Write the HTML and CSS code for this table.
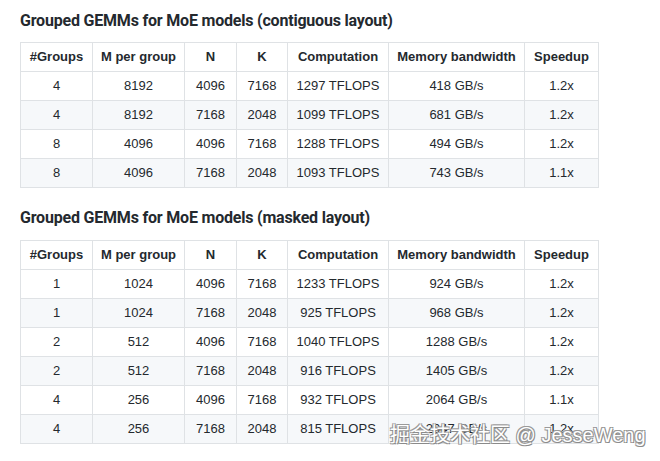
FILE: index.html
```html
<!DOCTYPE html>
<html>
<head>
<meta charset="utf-8">
<link rel="stylesheet" href="styles.css">
</head>
<body>
<div class="page">
  <h2 class="title title-first">Grouped GEMMs for MoE models (contiguous layout)</h2>
  <table class="perf">
    <colgroup>
      <col class="c1"><col class="c2"><col class="c3"><col class="c4"><col class="c5"><col class="c6"><col class="c7">
    </colgroup>
    <thead>
      <tr><th>#Groups</th><th>M per group</th><th>N</th><th>K</th><th>Computation</th><th>Memory bandwidth</th><th>Speedup</th></tr>
    </thead>
    <tbody>
      <tr><td>4</td><td>8192</td><td>4096</td><td>7168</td><td>1297 TFLOPS</td><td>418 GB/s</td><td>1.2x</td></tr>
      <tr><td>4</td><td>8192</td><td>7168</td><td>2048</td><td>1099 TFLOPS</td><td>681 GB/s</td><td>1.2x</td></tr>
      <tr><td>8</td><td>4096</td><td>4096</td><td>7168</td><td>1288 TFLOPS</td><td>494 GB/s</td><td>1.2x</td></tr>
      <tr><td>8</td><td>4096</td><td>7168</td><td>2048</td><td>1093 TFLOPS</td><td>743 GB/s</td><td>1.1x</td></tr>
    </tbody>
  </table>

  <h2 class="title title-second">Grouped GEMMs for MoE models (masked layout)</h2>
  <table class="perf">
    <colgroup>
      <col class="c1"><col class="c2"><col class="c3"><col class="c4"><col class="c5"><col class="c6"><col class="c7">
    </colgroup>
    <thead>
      <tr><th>#Groups</th><th>M per group</th><th>N</th><th>K</th><th>Computation</th><th>Memory bandwidth</th><th>Speedup</th></tr>
    </thead>
    <tbody>
      <tr><td>1</td><td>1024</td><td>4096</td><td>7168</td><td>1233 TFLOPS</td><td>924 GB/s</td><td>1.2x</td></tr>
      <tr><td>1</td><td>1024</td><td>7168</td><td>2048</td><td>925 TFLOPS</td><td>968 GB/s</td><td>1.2x</td></tr>
      <tr><td>2</td><td>512</td><td>4096</td><td>7168</td><td>1040 TFLOPS</td><td>1288 GB/s</td><td>1.2x</td></tr>
      <tr><td>2</td><td>512</td><td>7168</td><td>2048</td><td>916 TFLOPS</td><td>1405 GB/s</td><td>1.2x</td></tr>
      <tr><td>4</td><td>256</td><td>4096</td><td>7168</td><td>932 TFLOPS</td><td>2064 GB/s</td><td>1.1x</td></tr>
      <tr><td>4</td><td>256</td><td>7168</td><td>2048</td><td>815 TFLOPS</td><td>2047 GB/s</td><td>1.2x</td></tr>
    </tbody>
  </table>
</div>
<div class="watermark">掘金技术社区 @ JesseWeng</div>
</body>
</html>
```

FILE: styles.css
```css
html, body {
  margin: 0;
  padding: 0;
  background: #ffffff;
}

body {
  font-family: "Liberation Sans", Arial, sans-serif;
  color: #24292e;
  width: 660px;
  height: 461px;
  overflow: hidden;
  position: relative;
}

.page {
  padding: 11px 20px 0 20px;
}

.title {
  margin: 0;
  font-family: Roboto, "Liberation Sans", sans-serif;
  font-size: 16px;
  line-height: 20px;
  font-weight: bold;
  color: #24292e;
  letter-spacing: -0.2px;
}

.title-first {
  margin-bottom: 11px;
}

.title-second {
  margin-top: 20px;
  margin-bottom: 12px;
}

.perf {
  border-collapse: collapse;
  table-layout: fixed;
  width: 578px;
  font-size: 13px;
}

.perf .c1 { width: 72px; }
.perf .c2 { width: 92px; }
.perf .c3 { width: 52px; }
.perf .c4 { width: 51px; }
.perf .c5 { width: 101px; }
.perf .c6 { width: 136px; }
.perf .c7 { width: 74px; }

.perf th,
.perf td {
  border: 1px solid #dfe2e5;
  padding: 0;
  height: 28px;
  line-height: 28px;
  text-align: center;
  white-space: nowrap;
}

.perf th {
  font-weight: bold;
}

.perf tbody tr:nth-child(2n) {
  background: #f6f8fa;
}

.watermark {
  position: absolute;
  left: 390px;
  top: 421px;
  font-family: "Liberation Sans", "Noto Sans CJK SC", sans-serif;
  font-size: 20px;
  line-height: 28px;
  color: #ffffff;
  text-shadow: 1px 1px 0 #8a8a8a, -1px -1px 0 #9a9a9a, 1px -1px 0 #9a9a9a, -1px 1px 0 #9a9a9a;
  white-space: nowrap;
}
```
